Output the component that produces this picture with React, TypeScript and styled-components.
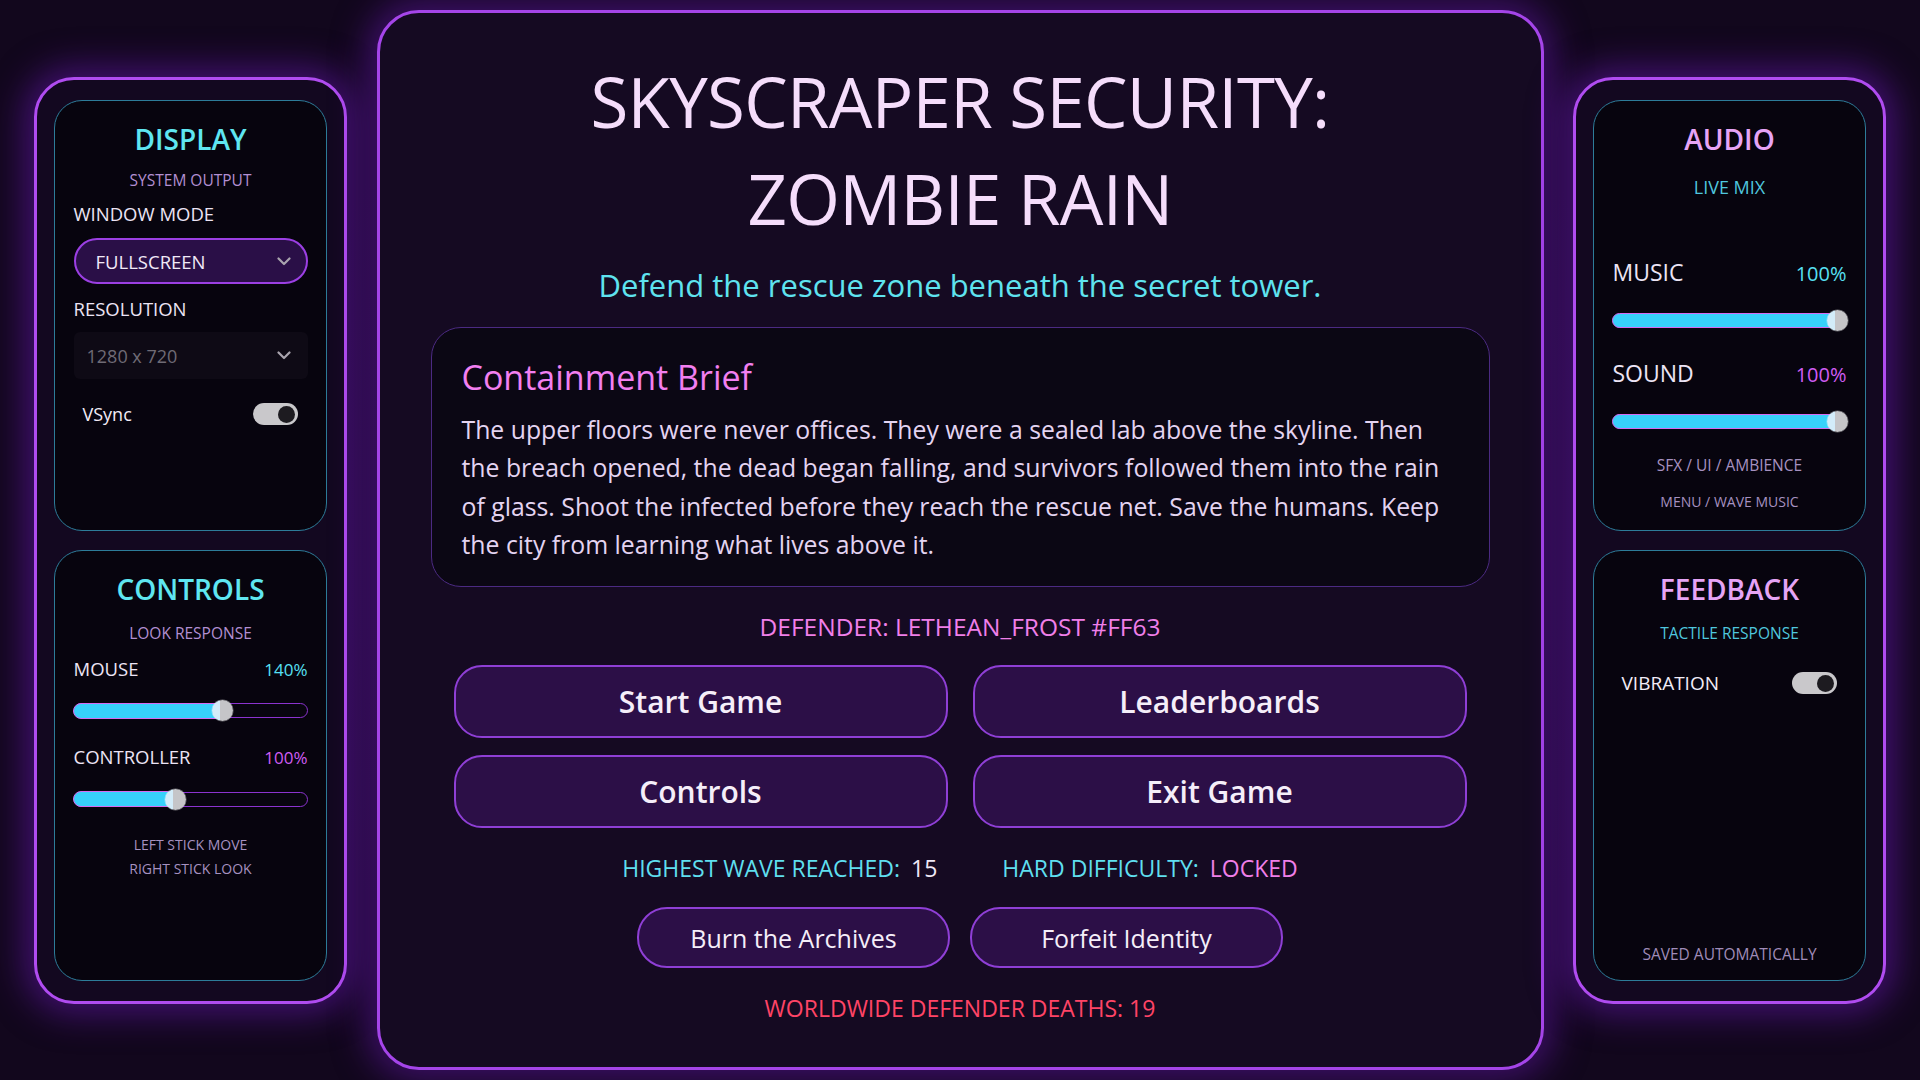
import React from "react";
import styled, { createGlobalStyle } from "styled-components";

const GlobalStyle = createGlobalStyle`
  html, body {
    margin: 0;
    padding: 0;
    background: #12071d;
  }
  body {
    font-family: "Open Sans", "Noto Sans", sans-serif;
    -webkit-font-smoothing: antialiased;
  }
  * { box-sizing: border-box; }
`;

const Screen = styled.div`
  width: 1920px;
  height: 1080px;
  overflow: hidden;
  display: flex;
  align-items: center;
  justify-content: space-between;
  padding: 0 34px;
  background:
    radial-gradient(ellipse 60% 70% at 50% 50%, #1a0a2c 0%, rgba(18, 7, 29, 0) 70%),
    #12071d;
`;

/* ---------- side columns ---------- */

const SidePanel = styled.aside`
  width: 313px;
  height: 927px;
  border: 3px solid #b04cf0;
  border-radius: 40px;
  background: #130820;
  padding: 20px 17px;
  display: flex;
  flex-direction: column;
  gap: 19px;
  box-shadow: 0 0 34px 10px rgba(104, 24, 178, 0.55);
`;

const Card = styled.section`
  flex: 1 1 0;
  min-height: 0;
  border: 1.5px solid #2d7c99;
  border-radius: 28px;
  background: #07040e;
  padding: 21.5px 18.5px 16px;
  display: flex;
  flex-direction: column;
`;

const CardTitle = styled.h2<{ $tone: "cyan" | "violet" }>`
  margin: 0;
  text-align: center;
  font-size: 28px;
  line-height: 34px;
  font-weight: 600;
  color: ${(p) => (p.$tone === "cyan" ? "#5fe6f1" : "#e6a4f6")};
`;

const CardSub = styled.div<{ $tone: "muted" | "teal"; $gap: number; $size: number }>`
  margin-top: ${(p) => p.$gap}px;
  text-align: center;
  font-size: ${(p) => p.$size}px;
  line-height: 20px;
  font-weight: 500;
  color: ${(p) => (p.$tone === "muted" ? "#b28fd2" : "#4fc7de")};
`;

const FieldLabel = styled.div<{ $gap: number }>`
  margin-top: ${(p) => p.$gap}px;
  font-size: 18.5px;
  line-height: 24px;
  font-weight: 500;
  color: #ece4f5;
`;

const SelectBox = styled.div<{ $active?: boolean; $gap: number }>`
  margin-top: ${(p) => p.$gap}px;
  height: ${(p) => (p.$active ? 46 : 47)}px;
  display: flex;
  align-items: center;
  justify-content: space-between;
  border-radius: ${(p) => (p.$active ? "999px" : "6px")};
  border: ${(p) => (p.$active ? "2px solid #9b3fe3" : "none")};
  background: ${(p) => (p.$active ? "#2a0f47" : "#0e0a15")};
  padding: ${(p) => (p.$active ? "0 15px 0 20px" : "0 17px 0 13px")};
  font-size: ${(p) => (p.$active ? 18.5 : 18)}px;
  font-weight: ${(p) => (p.$active ? 500 : 400)};
  color: ${(p) => (p.$active ? "#f1e9f8" : "#6f6b75")};
`;

const Chevron = () => (
  <svg width="14" height="9" viewBox="0 0 14 9" fill="none">
    <path d="M1.5 1.5 L7 7 L12.5 1.5" stroke="#a9a4ae" strokeWidth="2.2" strokeLinecap="round" strokeLinejoin="round" />
  </svg>
);

const ToggleRow = styled.div<{ $gap: number; $size: number }>`
  margin-top: ${(p) => p.$gap}px;
  height: 22px;
  padding: 0 10px 0 9px;
  display: flex;
  align-items: center;
  justify-content: space-between;
  font-size: ${(p) => p.$size}px;
  line-height: 22px;
  font-weight: 500;
  color: #f2ecf7;
`;

const Switch = styled.div`
  position: relative;
  width: 45px;
  height: 22px;
  border-radius: 11px;
  background: #c9c8cb;
  &::after {
    content: "";
    position: absolute;
    right: 2.5px;
    top: 2.5px;
    width: 17px;
    height: 17px;
    border-radius: 50%;
    background: #1d1b20;
  }
`;

const ValueRow = styled.div<{ $gap: number; $big?: boolean }>`
  margin-top: ${(p) => p.$gap}px;
  display: flex;
  align-items: baseline;
  justify-content: space-between;
  font-size: ${(p) => (p.$big ? 23 : 18.5)}px;
  line-height: ${(p) => (p.$big ? 30 : 24)}px;
  font-weight: 500;
  color: #ece4f5;
`;

const Value = styled.span<{ $tone: "cyan" | "magenta"; $big?: boolean }>`
  font-size: ${(p) => (p.$big ? 20 : 17)}px;
  font-weight: 500;
  color: ${(p) => (p.$tone === "cyan" ? "#57e0f4" : "#cf5cf3")};
`;

const Track = styled.div<{ $gap: number }>`
  position: relative;
  margin-top: ${(p) => p.$gap}px;
  height: 15px;
  border: 1.5px solid #8b33cf;
  border-radius: 999px;
  background: #08050f;
`;

const Fill = styled.div`
  position: absolute;
  left: -1.5px;
  top: -1.5px;
  bottom: -1.5px;
  border: 1.5px solid #d56cf1;
  border-radius: 999px;
  background: #37d1fb;
`;

const Thumb = styled.div`
  position: absolute;
  top: 50%;
  width: 21px;
  height: 21px;
  margin-left: -10.5px;
  margin-top: -10.5px;
  border-radius: 50%;
  background: linear-gradient(90deg, #d3ecf9 0%, #d3ecf9 40%, #c5c5c8 40%, #c5c5c8 100%);
  box-shadow: 0 0 0 0.5px rgba(255, 255, 255, 0.4);
`;

const Slider = ({ ratio, gap }: { ratio: number; gap: number }) => {
  const pos = `calc(8.5px + ${ratio} * (100% - 17px))`;
  return (
    <Track $gap={gap}>
      <Fill style={{ width: `calc(${pos} + 1.5px)` }} />
      <Thumb style={{ left: pos }} />
    </Track>
  );
};

const Note = styled.div<{ $gap: number; $size?: number }>`
  margin-top: ${(p) => p.$gap}px;
  text-align: center;
  font-size: ${(p) => p.$size ?? 14}px;
  line-height: 24px;
  font-weight: 500;
  color: #a691c0;
`;

const Footer = styled.div`
  margin-top: auto;
  text-align: center;
  font-size: 15.5px;
  line-height: 20px;
  font-weight: 500;
  color: #a08cb9;
`;

/* ---------- centre column ---------- */

const MainPanel = styled.main`
  width: 1167px;
  height: 1060px;
  border: 3px solid #a545e9;
  border-radius: 42px;
  background: #150a22;
  padding: 40px 51px 0;
  display: flex;
  flex-direction: column;
  align-items: center;
  box-shadow: 0 0 34px 10px rgba(104, 24, 178, 0.5);
`;

const Title = styled.h1`
  margin: 0;
  text-align: center;
  font-size: 69px;
  line-height: 96.6px;
  font-weight: 500;
  letter-spacing: -0.7px;
  color: #f5ddfb;
`;

const Tagline = styled.p`
  margin: 18px 0 0;
  font-size: 31px;
  line-height: 42px;
  font-weight: 500;
  color: #5fe3ef;
`;

const Brief = styled.div`
  margin-top: 21px;
  width: 1059px;
  height: 260px;
  border: 1.5px solid #4b2a82;
  border-radius: 30px;
  background: #0b0714;
  padding: 26.5px 30px 0;
`;

const BriefHeading = styled.h3`
  margin: 0;
  font-size: 34px;
  line-height: 44px;
  font-weight: 500;
  color: #f27ff0;
`;

const BriefText = styled.p`
  margin: 11px 0 0;
  font-size: 24.8px;
  line-height: 38.5px;
  font-weight: 500;
  color: #e4d4f1;
`;

const Defender = styled.div`
  margin-top: 24px;
  font-size: 24.5px;
  line-height: 32px;
  font-weight: 500;
  color: #f07fe9;
`;

const ButtonGrid = styled.div`
  margin-top: 22px;
  display: grid;
  grid-template-columns: 494px 494px;
  grid-auto-rows: 73px;
  column-gap: 25px;
  row-gap: 17px;
`;

const MenuButton = styled.button<{ $small?: boolean }>`
  width: ${(p) => (p.$small ? "313px" : "100%")};
  height: ${(p) => (p.$small ? "61px" : "100%")};
  border: 2px solid #8f3fd6;
  border-radius: ${(p) => (p.$small ? 30 : 28)}px;
  background: #2c0f47;
  color: #f5eef9;
  font-family: inherit;
  font-size: ${(p) => (p.$small ? 25 : 30)}px;
  font-weight: ${(p) => (p.$small ? 500 : 600)};
  cursor: pointer;
`;

const StatsRow = styled.div`
  margin-top: 24px;
  display: flex;
  gap: 65px;
  font-size: 23px;
  line-height: 32px;
  font-weight: 500;
`;

const Stat = styled.div`
  display: flex;
  gap: 11px;
`;

const StatLabel = styled.span`
  color: #5fdfef;
`;

const StatValue = styled.span<{ $tone: "plain" | "pink" }>`
  color: ${(p) => (p.$tone === "plain" ? "#efe8f6" : "#f07fe9")};
`;

const SmallRow = styled.div`
  margin-top: 23px;
  display: flex;
  gap: 20px;
`;

const Deaths = styled.div`
  margin-top: 23.5px;
  font-size: 23px;
  line-height: 32px;
  font-weight: 500;
  color: #ff4466;
`;

export default function App() {
  return (
    <>
      <GlobalStyle />
      <Screen>
        <SidePanel>
          <Card>
            <CardTitle $tone="cyan">DISPLAY</CardTitle>
            <CardSub $tone="muted" $gap={14} $size={15.5}>SYSTEM OUTPUT</CardSub>
            <FieldLabel $gap={11.5}>WINDOW MODE</FieldLabel>
            <SelectBox $active $gap={12.5}>
              <span>FULLSCREEN</span>
              <Chevron />
            </SelectBox>
            <FieldLabel $gap={12.5}>RESOLUTION</FieldLabel>
            <SelectBox $gap={11.5}>
              <span>1280 x 720</span>
              <Chevron />
            </SelectBox>
            <ToggleRow $gap={24} $size={18}>
              <span>VSync</span>
              <Switch />
            </ToggleRow>
          </Card>
          <Card>
            <CardTitle $tone="cyan">CONTROLS</CardTitle>
            <CardSub $tone="muted" $gap={16.5} $size={15.5}>LOOK RESPONSE</CardSub>
            <ValueRow $gap={14}>
              <span>MOUSE</span>
              <Value $tone="cyan">140%</Value>
            </ValueRow>
            <Slider ratio={0.65} gap={21.5} />
            <ValueRow $gap={27}>
              <span>CONTROLLER</span>
              <Value $tone="magenta">100%</Value>
            </ValueRow>
            <Slider ratio={0.43} gap={21.5} />
            <Note $gap={26}>
              LEFT STICK MOVE
              <br />
              RIGHT STICK LOOK
            </Note>
          </Card>
        </SidePanel>

        <MainPanel>
          <Title>
            SKYSCRAPER SECURITY:
            <br />
            ZOMBIE RAIN
          </Title>
          <Tagline>Defend the rescue zone beneath the secret tower.</Tagline>
          <Brief>
            <BriefHeading>Containment Brief</BriefHeading>
            <BriefText>
              The upper floors were never offices. They were a sealed lab above the skyline. Then the breach
              opened, the dead began falling, and survivors followed them into the rain of glass. Shoot the
              infected before they reach the rescue net. Save the humans. Keep the city from learning what
              lives above it.
            </BriefText>
          </Brief>
          <Defender>DEFENDER: LETHEAN_FROST #FF63</Defender>
          <ButtonGrid>
            <MenuButton>Start Game</MenuButton>
            <MenuButton>Leaderboards</MenuButton>
            <MenuButton>Controls</MenuButton>
            <MenuButton>Exit Game</MenuButton>
          </ButtonGrid>
          <StatsRow>
            <Stat>
              <StatLabel>HIGHEST WAVE REACHED:</StatLabel>
              <StatValue $tone="plain">15</StatValue>
            </Stat>
            <Stat>
              <StatLabel>HARD DIFFICULTY:</StatLabel>
              <StatValue $tone="pink">LOCKED</StatValue>
            </Stat>
          </StatsRow>
          <SmallRow>
            <MenuButton $small>Burn the Archives</MenuButton>
            <MenuButton $small>Forfeit Identity</MenuButton>
          </SmallRow>
          <Deaths>WORLDWIDE DEFENDER DEATHS: 19</Deaths>
        </MainPanel>

        <SidePanel>
          <Card>
            <CardTitle $tone="violet">AUDIO</CardTitle>
            <CardSub $tone="teal" $gap={21} $size={18}>LIVE MIX</CardSub>
            <ValueRow $gap={60} $big>
              <span>MUSIC</span>
              <Value $tone="cyan" $big>100%</Value>
            </ValueRow>
            <Slider ratio={1} gap={24.5} />
            <ValueRow $gap={30} $big>
              <span>SOUND</span>
              <Value $tone="magenta" $big>100%</Value>
            </ValueRow>
            <Slider ratio={1} gap={24.5} />
            <Note $gap={24} $size={15.5}>SFX / UI / AMBIENCE</Note>
            <Note $gap={13} $size={14}>MENU / WAVE MUSIC</Note>
          </Card>
          <Card>
            <CardTitle $tone="violet">FEEDBACK</CardTitle>
            <CardSub $tone="teal" $gap={17} $size={15.5}>TACTILE RESPONSE</CardSub>
            <ToggleRow $gap={29} $size={19}>
              <span>VIBRATION</span>
              <Switch />
            </ToggleRow>
            <Footer>SAVED AUTOMATICALLY</Footer>
          </Card>
        </SidePanel>
      </Screen>
    </>
  );
}
